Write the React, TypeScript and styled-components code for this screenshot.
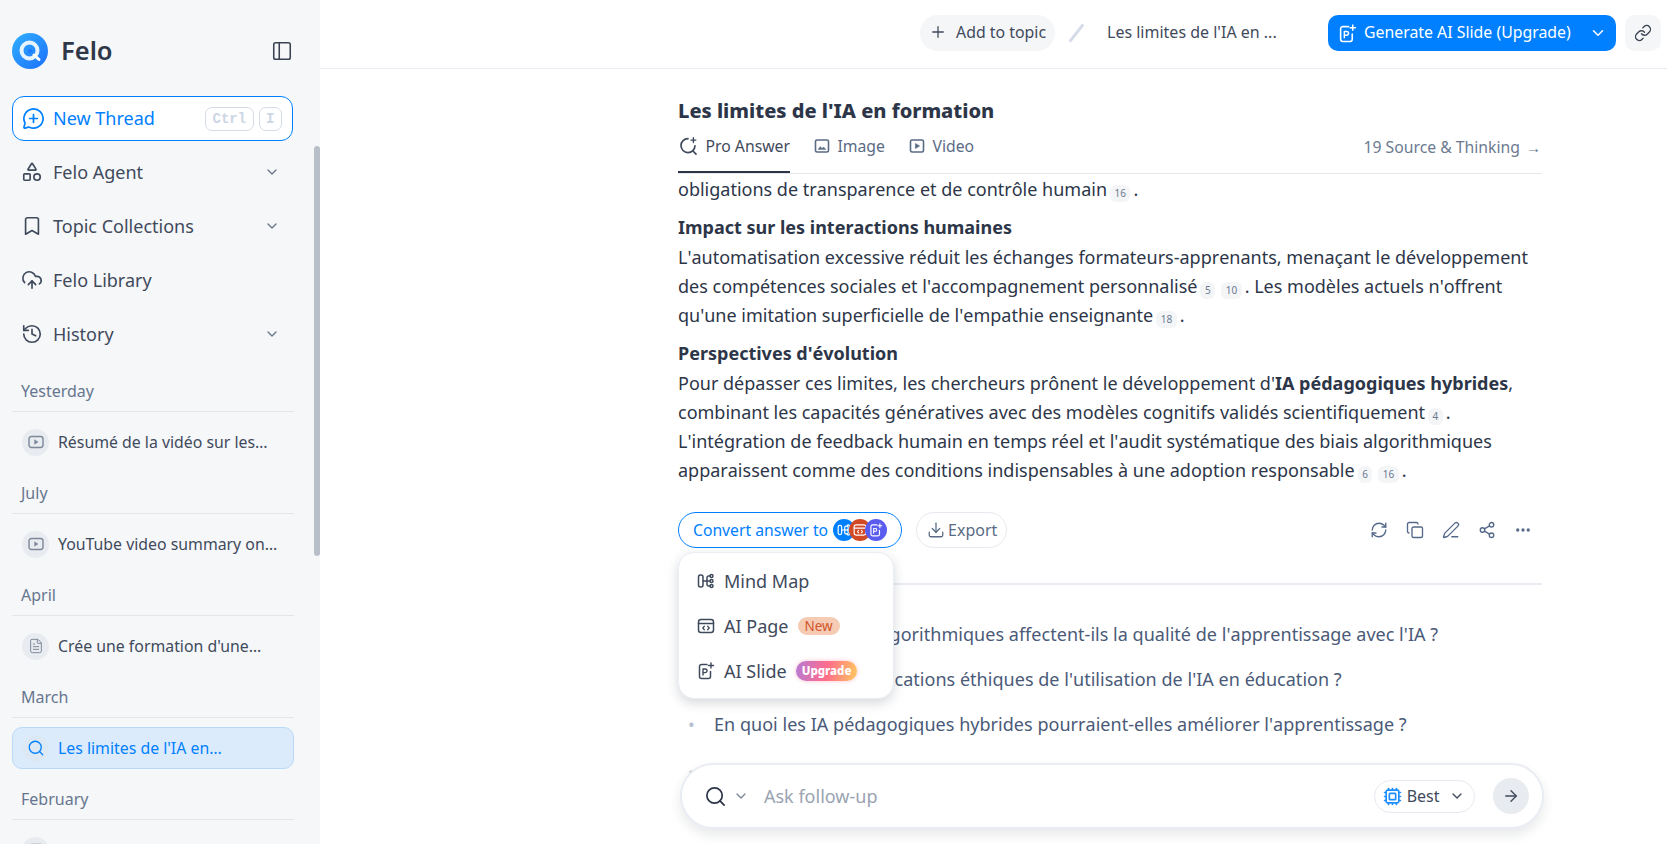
import styled, { createGlobalStyle } from "styled-components";
import {
  ArrowRight,
  Bookmark,
  ChevronDown,
  CloudUpload,
  Copy,
  Cpu,
  Download,
  Ellipsis,
  FileText,
  History,
  Link as LinkIcon,
  MessageCirclePlus,
  PanelLeft,
  PenLine,
  Plus,
  RefreshCw,
  Search,
  Shapes,
  Share2,
} from "lucide-react";

const GlobalStyle = createGlobalStyle`
  * { box-sizing: border-box; }
  html, body { margin: 0; height: 100%; }
  body {
    font-family: "Noto Sans", "Liberation Sans", sans-serif;
    color: #2d3648;
    background: #fff;
    overflow: hidden;
  }
`;

function Logo() {
  return (
    <svg width="36" height="36" viewBox="0 0 36 36">
      <defs>
        <linearGradient id="logoFill" x1="0" y1="0" x2="1" y2="1">
          <stop offset="0" stopColor="#2fb0ff" />
          <stop offset="1" stopColor="#1d6ffb" />
        </linearGradient>
      </defs>
      <circle cx="18" cy="18" r="18" fill="url(#logoFill)" />
      <circle cx="17.5" cy="17.5" r="8" fill="none" stroke="#e6f4ff" strokeWidth="4" />
      <circle cx="18" cy="18" r="2" fill="#1d7bfb" />
      <path d="M22 22l5 4.5" stroke="#fff" strokeWidth="3" strokeLinecap="round" />
    </svg>
  );
}

function SlideIcon({ size = 18 }: { size?: number }) {
  return (
    <svg width={size} height={size} viewBox="0 0 18 18" fill="none" stroke="currentColor" strokeWidth="1.5" strokeLinecap="round" strokeLinejoin="round">
      <path d="M10 2.5H4.5a2 2 0 0 0-2 2v10a2 2 0 0 0 2 2h7a2 2 0 0 0 2-2V9.5" />
      <path d="M6 13V7h2.2a1.7 1.7 0 0 1 0 3.6H6" strokeWidth="1.4" />
      <path d="M14 1v5M11.5 3.5h5" strokeWidth="1.4" />
    </svg>
  );
}

function MindMapIcon({ size = 18 }: { size?: number }) {
  return (
    <svg width={size} height={size} viewBox="0 0 18 18" fill="none" stroke="currentColor" strokeWidth="1.5" strokeLinecap="round">
      <rect x="1.5" y="3" width="4.5" height="12" rx="2" />
      <path d="M6 9h4M13 4h-1.5a1.5 1.5 0 0 0-1.5 1.5v7a1.5 1.5 0 0 0 1.5 1.5H13" />
      <circle cx="14.5" cy="4" r="1.5" />
      <circle cx="14.5" cy="9" r="1.5" />
      <circle cx="14.5" cy="14" r="1.5" />
      <path d="M10 9h3" />
    </svg>
  );
}

function PageIcon({ size = 18 }: { size?: number }) {
  return (
    <svg width={size} height={size} viewBox="0 0 18 18" fill="none" stroke="currentColor" strokeWidth="1.5" strokeLinecap="round" strokeLinejoin="round">
      <rect x="1.5" y="2.5" width="15" height="13" rx="2.5" />
      <path d="M1.5 6.5h15" />
      <path d="M7.3 9.3L5.8 11l1.5 1.7M10.7 9.3l1.5 1.7-1.5 1.7" strokeWidth="1.3" />
    </svg>
  );
}

function PlayBoxIcon({ size = 16 }: { size?: number }) {
  return (
    <svg width={size} height={size} viewBox="0 0 16 16" fill="none" stroke="currentColor" strokeWidth="1.6" strokeLinejoin="round">
      <rect x="1.5" y="2" width="13" height="12" rx="1.6" />
      <path d="M6.4 5.5L10.6 8l-4.2 2.5z" fill="currentColor" strokeWidth="0.6" />
    </svg>
  );
}

function VideoRowIcon() {
  return (
    <svg width="16" height="14" viewBox="0 0 16 14" fill="none" stroke="currentColor" strokeWidth="1.4" strokeLinejoin="round">
      <rect x="1" y="1.5" width="14" height="11" rx="2.4" />
      <path d="M6.6 4.8L10 7l-3.4 2.2z" fill="currentColor" strokeWidth="0.5" />
    </svg>
  );
}

function ImageBoxIcon() {
  return (
    <svg width="16" height="16" viewBox="0 0 16 16" fill="none" stroke="currentColor" strokeWidth="1.6" strokeLinejoin="round">
      <rect x="1.5" y="2" width="13" height="12" rx="1.6" />
      <path d="M4 11.4l2.3-2.8 1.7 1.8 1.5-1.5 2.5 2.5z" fill="currentColor" strokeWidth="0.4" />
    </svg>
  );
}

function ProSearchIcon() {
  return (
    <svg width="20" height="20" viewBox="0 0 20 20" fill="none" stroke="currentColor" strokeWidth="1.7" strokeLinecap="round">
      <path d="M10 2.6a7 7 0 1 0 7 7.2" />
      <path d="M15 15l3 3.2" />
      <path d="M15.4 1.6v5M12.9 4.1h5" strokeWidth="1.4" />
    </svg>
  );
}

const Page = styled.div`
  display: flex;
  height: 844px;
  overflow: hidden;
`;

const Sidebar = styled.aside`
  position: relative;
  flex: 0 0 320px;
  height: 100%;
  padding: 33px 26px 0 12px;
  background: #f6f7f9;
  overflow: hidden;
`;

const ScrollThumb = styled.div`
  position: absolute;
  top: 146px;
  right: 0;
  width: 6px;
  height: 410px;
  border-radius: 3px;
  background: #b9bfc9;
`;

const Brand = styled.div`
  display: flex;
  align-items: center;
  height: 36px;
  padding-right: 1px;
`;

const BrandName = styled.span`
  margin-left: 13px;
  padding-bottom: 2px;
  font-size: 25.5px;
  font-weight: 600;
  color: #2f3848;
`;

const CollapseButton = styled.span`
  display: flex;
  margin-left: auto;
  color: #3a4352;
`;

const NewThread = styled.div`
  display: flex;
  align-items: center;
  height: 45px;
  margin: 27px 1px 4px 0;
  padding: 0 10px 0 9px;
  border: 1px solid #0080ff;
  border-radius: 12px;
  background: #fff;
  color: #0080ff;
  font-size: 18px;
`;

const NewThreadLabel = styled.span`
  margin-left: 8px;
  padding-bottom: 1px;
`;

const Keys = styled.div`
  display: flex;
  gap: 5px;
  margin-left: auto;
`;

const Key = styled.kbd`
  display: flex;
  align-items: center;
  justify-content: center;
  height: 24px;
  padding: 0 6.5px;
  border: 1px solid #d5dce8;
  border-radius: 7px;
  color: #cdd6e4;
  font: bold 14px "Liberation Mono", monospace;
`;

const NavItem = styled.div`
  display: flex;
  align-items: center;
  gap: 10px;
  height: 54px;
  padding: 0 14px 0 9px;
  color: #3f4a5c;
  font-size: 18px;
`;

const NavChevron = styled.span`
  display: flex;
  margin-left: auto;
  color: #6b7788;
`;

const Group = styled.section`
  padding-top: 18px;
`;

const GroupLabel = styled.div`
  height: 32px;
  padding: 0 9px;
  color: #66768f;
  font-size: 16px;
  line-height: 24px;
`;

const GroupRule = styled.div`
  height: 1px;
  background: #e3e6eb;
`;

const ThreadRow = styled.div<{ $active?: boolean }>`
  display: flex;
  align-items: center;
  gap: 9px;
  height: 42px;
  margin: 9px 0 0;
  padding: 0 9px;
  border: 1px solid ${({ $active }) => ($active ? "#b9d9fa" : "transparent")};
  border-radius: 10px;
  background: ${({ $active }) => ($active ? "#dcebfc" : "transparent")};
  color: ${({ $active }) => ($active ? "#0080ff" : "#3f4a5c")};
  font-size: 15.85px;
  white-space: nowrap;
`;

const ThreadIcon = styled.span<{ $active?: boolean }>`
  display: flex;
  align-items: center;
  justify-content: center;
  flex: 0 0 27px;
  height: 27px;
  border-radius: 50%;
  color: ${({ $active }) => ($active ? "#0080ff" : "#7d8899")};
  background: ${({ $active }) => ($active ? "#dde8f5" : "#e8ebf0")};
`;

const Main = styled.main`
  position: relative;
  flex: 1;
  height: 100%;
  overflow: hidden;
  background: #fff;
`;

const TopBar = styled.header`
  display: flex;
  align-items: center;
  justify-content: flex-end;
  height: 69px;
  padding: 0 6px 2px 0;
  border-bottom: 1px solid #e9ecf2;
`;

const AddTopic = styled.div`
  display: flex;
  align-items: center;
  gap: 9px;
  height: 36px;
  padding: 0 9px 2px;
  border-radius: 18px;
  background: #f5f6f8;
  color: #3f4a5c;
  font-size: 15.85px;
`;

const Slash = styled.span`
  width: 3px;
  height: 22px;
  margin: 0 29px 0 20px;
  background: #d5dbe8;
  transform: rotate(38deg);
`;

const Crumb = styled.div`
  width: 221px;
  padding-bottom: 2px;
  color: #3f4a5c;
  font-size: 16px;
  white-space: nowrap;
`;

const GenerateButton = styled.div`
  display: flex;
  align-items: center;
  width: 288px;
  height: 36px;
  padding: 0 9px 0 10px;
  border-radius: 10px;
  background: #0080ff;
  color: #fff;
  font-size: 15.85px;
`;

const GenerateLabel = styled.span`
  margin-left: 7px;
  padding-bottom: 2px;
`;

const GenerateChevron = styled.span`
  display: flex;
  margin-left: auto;
`;

const LinkButton = styled.div`
  display: flex;
  align-items: center;
  justify-content: center;
  width: 36px;
  height: 36px;
  margin-left: 9px;
  border-radius: 10px;
  background: #f5f6f8;
  color: #3a4352;
`;

const Column = styled.div`
  width: 864px;
  margin-left: 358px;
  padding-top: 28px;
`;

const Title = styled.h1`
  margin: 0;
  font-size: 20px;
  font-weight: 800;
  line-height: 28px;
  color: #2d3648;
  font-kerning: none;
`;

const Tabs = styled.nav`
  display: flex;
  align-items: flex-start;
  gap: 24px;
  height: 49px;
  margin-bottom: 1px;
  border-bottom: 1px solid #e5e7eb;
`;

const Tab = styled.div<{ $active?: boolean }>`
  display: flex;
  align-items: center;
  gap: 7.5px;
  height: 48px;
  padding: 4px 0 9px;
  border-bottom: 2px solid ${({ $active }) => ($active ? "#2d3648" : "transparent")};
  color: ${({ $active }) => ($active ? "#3f4a5c" : "#5a6b85")};
  font-size: 15.75px;
`;

const SourcesLink = styled.div`
  margin-left: auto;
  padding: 11px 1px 0 0;
  color: #6b7a90;
  font-size: 15.75px;
`;

const SourcesArrow = styled.span`
  margin-left: 6px;
  font-size: 15px;
`;

const Paragraph = styled.p`
  margin: 0 0 9px;
  font-size: 18px;
  line-height: 29.25px;
  color: #2d3648;
  font-kerning: none;
`;

const Strong = styled.strong`
  font-weight: 700;
`;

const Cite = styled.span`
  display: inline-block;
  height: 17px;
  margin: 0 3px;
  padding: 0 4.5px;
  border-radius: 6px;
  background: #f4f5f7;
  color: #6b7a90;
  font-size: 10px;
  line-height: 17px;
  text-align: center;
  vertical-align: -1px;
`;

const Actions = styled.div`
  position: relative;
  display: flex;
  align-items: center;
  gap: 14px;
  height: 36px;
  margin-top: 26px;
`;

const ConvertButton = styled.div`
  display: flex;
  align-items: center;
  gap: 5px;
  height: 36px;
  padding: 0 14px;
  border: 1px solid #0080ff;
  border-radius: 18px;
  color: #0080ff;
  font-size: 15.7px;
`;

const StackIcons = styled.div`
  display: flex;
`;

const StackIcon = styled.span<{ $bg: string }>`
  display: flex;
  align-items: center;
  justify-content: center;
  width: 22px;
  height: 22px;
  margin-right: -6px;
  border-radius: 50%;
  background: ${({ $bg }) => $bg};
  color: #fff;

  &:last-child {
    margin-right: 0;
  }
`;

const ExportButton = styled.div`
  display: flex;
  align-items: center;
  gap: 3px;
  height: 36px;
  padding: 0 9px 0 10px;
  border: 1px solid #e6e9ef;
  border-radius: 18px;
  color: #5a6b85;
  font-size: 16px;
`;

const Tools = styled.div`
  display: flex;
  margin: 0 1px 0 auto;
`;

const Tool = styled.span`
  display: flex;
  align-items: center;
  justify-content: center;
  width: 36px;
  height: 36px;
  color: #55698a;
`;

const Menu = styled.div`
  position: absolute;
  top: 40px;
  left: 0;
  z-index: 5;
  width: 216px;
  padding: 6px 0 4px;
  border: 1px solid #eaedf2;
  border-radius: 16px;
  background: #fff;
  box-shadow: 0 4px 12px rgba(30, 40, 60, 0.18);
`;

const MenuItem = styled.div`
  display: flex;
  align-items: center;
  gap: 9px;
  height: 45px;
  padding-left: 18px;
  color: #3f4a5c;
  font-size: 18px;
`;

const NewBadge = styled.span`
  height: 18px;
  padding: 0 7px;
  border-radius: 9px;
  background: #f5cbb3;
  color: #d2552a;
  font-size: 13.5px;
  line-height: 18px;
`;

const UpgradeBadge = styled.span`
  height: 20px;
  padding: 0 6px;
  border-radius: 10px;
  background: linear-gradient(100deg, #b67bd6 0%, #ff6c8c 50%, #ffc85e 100%);
  box-shadow: 0 0 4px rgba(255, 110, 140, 0.45);
  color: #fff;
  font-size: 11.5px;
  font-weight: 800;
  line-height: 20px;
`;

const Questions = styled.ul`
  margin: 35px 0 0;
  padding: 27px 0 0;
  border-top: 2px solid #e9ecf2;
  list-style: none;
`;

const Question = styled.li`
  display: flex;
  align-items: center;
  height: 45px;
  color: #4a5a78;
  font-size: 18px;
  font-kerning: none;
  letter-spacing: 0.03px;
  white-space: nowrap;

  &:last-child {
    padding-top: 5px;
  }
`;

const Bullet = styled.span`
  flex: 0 0 36px;
  padding-left: 10px;
  color: #b6c0d0;
  font-size: 18px;
`;

const AskBox = styled.div`
  position: absolute;
  left: 360px;
  bottom: 15px;
  z-index: 4;
  display: flex;
  align-items: center;
  width: 864px;
  height: 66px;
  padding: 0 13px 0 22px;
  border: 2px solid #e9ecf2;
  border-radius: 33px;
  background: #fff;
  box-shadow: 0 6px 12px rgba(30, 40, 60, 0.1);
`;

const AskMode = styled.div`
  display: flex;
  align-items: center;
  gap: 6px;
  color: #2d3648;
`;

const AskChevron = styled.span`
  display: flex;
  color: #7d8899;
`;

const AskPlaceholder = styled.span`
  margin-left: 15px;
  color: #9aa3b2;
  font-size: 18px;
`;

const ModelPill = styled.div`
  display: flex;
  align-items: center;
  gap: 5px;
  height: 33px;
  margin-left: auto;
  padding: 0 9px 0 8px;
  border: 1px solid #e6e9ef;
  border-radius: 17px;
  color: #3f4a5c;
  font-size: 16px;
`;

const ModelIcon = styled.span`
  display: flex;
  color: #1f8fff;
`;

const ModelChevron = styled(AskChevron)`
  margin-left: 4.5px;
  color: #3f4a5c;
`;

const SendButton = styled.div`
  display: flex;
  align-items: center;
  justify-content: center;
  width: 36px;
  height: 36px;
  margin-left: 18px;
  border-radius: 50%;
  background: #e8ebf0;
  color: #3f4a5c;
`;

const navItems = [
  { icon: <Shapes size={22} strokeWidth={1.8} />, label: "Felo Agent", more: true },
  { icon: <Bookmark size={22} strokeWidth={1.8} />, label: "Topic Collections", more: true },
  { icon: <CloudUpload size={22} strokeWidth={1.8} />, label: "Felo Library", more: false },
  { icon: <History size={22} strokeWidth={1.8} />, label: "History", more: true },
];

const threadGroups = [
  { label: "Yesterday", icon: <VideoRowIcon />, title: "Résumé de la vidéo sur les…" },
  { label: "July", icon: <VideoRowIcon />, title: "YouTube video summary on…" },
  { label: "April", icon: <FileText size={16} strokeWidth={1.5} />, title: "Crée une formation d'une…" },
  { label: "March", icon: <Search size={18} strokeWidth={1.7} />, title: "Les limites de l'IA en…", active: true },
  { label: "February", icon: <VideoRowIcon />, title: "Les problèmes de la formation…" },
];

const questions = [
  "Comment les biais algorithmiques affectent-ils la qualité de l'apprentissage avec l'IA ?",
  "Quelles sont les implications éthiques de l'utilisation de l'IA en éducation ?",
  "En quoi les IA pédagogiques hybrides pourraient-elles améliorer l'apprentissage ?",
  "Quel rôle pour les formateurs dans l'intégration responsable de l'IA en formation ?",
];

export default function App() {
  return (
    <>
      <GlobalStyle />
      <Page>
        <Sidebar>
          <Brand>
            <Logo />
            <BrandName>Felo</BrandName>
            <CollapseButton>
              <PanelLeft size={22} strokeWidth={1.7} />
            </CollapseButton>
          </Brand>
          <NewThread>
            <MessageCirclePlus size={23} strokeWidth={1.8} />
            <NewThreadLabel>New Thread</NewThreadLabel>
            <Keys>
              <Key>Ctrl</Key>
              <Key>I</Key>
            </Keys>
          </NewThread>
          {navItems.map((item) => (
            <NavItem key={item.label}>
              {item.icon}
              {item.label}
              {item.more && (
                <NavChevron>
                  <ChevronDown size={16} />
                </NavChevron>
              )}
            </NavItem>
          ))}
          {threadGroups.map((group) => (
            <Group key={group.label}>
              <GroupLabel>{group.label}</GroupLabel>
              <GroupRule />
              <ThreadRow $active={group.active}>
                <ThreadIcon $active={group.active}>{group.icon}</ThreadIcon>
                {group.title}
              </ThreadRow>
            </Group>
          ))}
          <ScrollThumb />
        </Sidebar>
        <Main>
          <TopBar>
            <AddTopic>
              <Plus size={18} strokeWidth={1.7} />
              Add to topic
            </AddTopic>
            <Slash />
            <Crumb>Les limites de l'IA en ...</Crumb>
            <GenerateButton>
              <SlideIcon size={19} />
              <GenerateLabel>Generate AI Slide (Upgrade)</GenerateLabel>
              <GenerateChevron>
                <ChevronDown size={18} />
              </GenerateChevron>
            </GenerateButton>
            <LinkButton>
              <LinkIcon size={18} strokeWidth={1.8} />
            </LinkButton>
          </TopBar>
          <Column>
            <Title>Les limites de l'IA en formation</Title>
            <Tabs>
              <Tab $active>
                <ProSearchIcon />
                Pro Answer
              </Tab>
              <Tab>
                <ImageBoxIcon />
                Image
              </Tab>
              <Tab>
                <PlayBoxIcon />
                Video
              </Tab>
              <SourcesLink>
                19 Source &amp; Thinking
                <SourcesArrow>→</SourcesArrow>
              </SourcesLink>
            </Tabs>
            <Paragraph>
              obligations de transparence et de contrôle humain<Cite>16</Cite>.
            </Paragraph>
            <Paragraph>
              <Strong>Impact sur les interactions humaines</Strong>
              <br />
              L'automatisation excessive réduit les échanges formateurs-apprenants, menaçant le développement des
              compétences sociales et l'accompagnement personnalisé<Cite>5</Cite>
              <Cite>10</Cite>. Les modèles actuels n'offrent qu'une imitation superficielle de l'empathie enseignante
              <Cite>18</Cite>.
            </Paragraph>
            <Paragraph>
              <Strong>Perspectives d'évolution</Strong>
              <br />
              Pour dépasser ces limites, les chercheurs prônent le développement d'
              <Strong>IA pédagogiques hybrides</Strong>, combinant les capacités génératives avec des modèles cognitifs
              validés scientifiquement<Cite>4</Cite>. L'intégration de feedback humain en temps réel et l'audit
              systématique des biais algorithmiques apparaissent comme des conditions indispensables à une adoption
              responsable<Cite>6</Cite>
              <Cite>16</Cite>.
            </Paragraph>
            <Actions>
              <ConvertButton>
                Convert answer to
                <StackIcons>
                  <StackIcon $bg="#0080ff">
                    <MindMapIcon size={14} />
                  </StackIcon>
                  <StackIcon $bg="#d24a25">
                    <PageIcon size={14} />
                  </StackIcon>
                  <StackIcon $bg="#5a5cf0">
                    <SlideIcon size={14} />
                  </StackIcon>
                </StackIcons>
              </ConvertButton>
              <ExportButton>
                <Download size={18} strokeWidth={1.7} />
                Export
              </ExportButton>
              <Tools>
                <Tool>
                  <RefreshCw size={18} strokeWidth={1.8} />
                </Tool>
                <Tool>
                  <Copy size={18} strokeWidth={1.8} />
                </Tool>
                <Tool>
                  <PenLine size={18} strokeWidth={1.8} />
                </Tool>
                <Tool>
                  <Share2 size={18} strokeWidth={1.8} />
                </Tool>
                <Tool>
                  <Ellipsis size={18} strokeWidth={2.4} />
                </Tool>
              </Tools>
              <Menu>
                <MenuItem>
                  <MindMapIcon size={18} />
                  Mind Map
                </MenuItem>
                <MenuItem>
                  <PageIcon size={18} />
                  AI Page
                  <NewBadge>New</NewBadge>
                </MenuItem>
                <MenuItem>
                  <SlideIcon size={18} />
                  AI Slide
                  <UpgradeBadge>Upgrade</UpgradeBadge>
                </MenuItem>
              </Menu>
            </Actions>
            <Questions>
              {questions.map((question) => (
                <Question key={question}>
                  <Bullet>•</Bullet>
                  {question}
                </Question>
              ))}
            </Questions>
          </Column>
          <AskBox>
            <AskMode>
              <Search size={23} strokeWidth={1.8} />
              <AskChevron>
                <ChevronDown size={16} />
              </AskChevron>
            </AskMode>
            <AskPlaceholder>Ask follow-up</AskPlaceholder>
            <ModelPill>
              <ModelIcon>
                <Cpu size={19} strokeWidth={2.1} />
              </ModelIcon>
              Best
              <ModelChevron>
                <ChevronDown size={16} />
              </ModelChevron>
            </ModelPill>
            <SendButton>
              <ArrowRight size={18} strokeWidth={1.8} />
            </SendButton>
          </AskBox>
        </Main>
      </Page>
    </>
  );
}
